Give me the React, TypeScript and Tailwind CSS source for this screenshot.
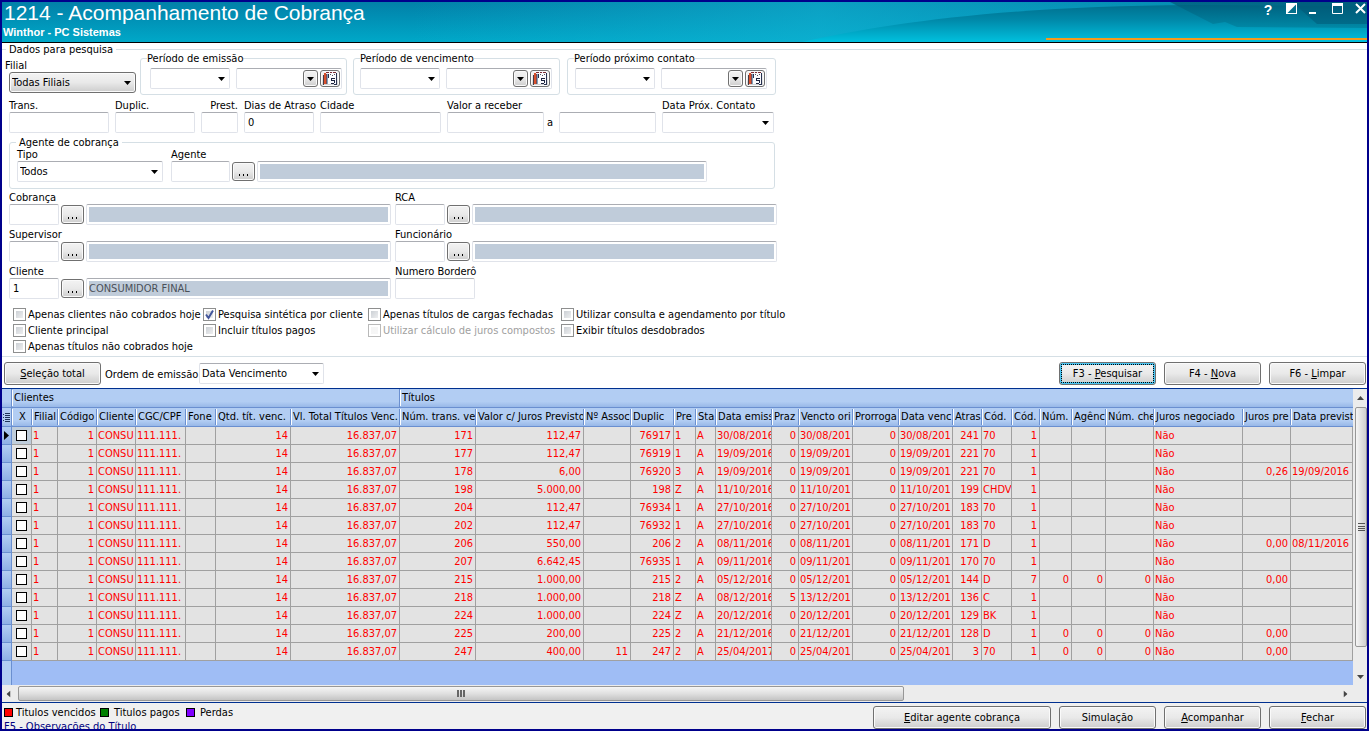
import React from "react";
import clsx from "clsx";

const fieldBorder =
  "border border-[#e0e3ea] border-t-[#abadb3] rounded-xs bg-white";
const buttonFace =
  "rounded-[3px] border border-[#707070] bg-linear-to-b from-[#f3f3f3] from-0% via-[#e9e9e9] via-50% to-[#cdcdcd] to-100% shadow-[inset_0_0_0_1px_#fafafa]";

function Arrow({ className }: { className?: string }) {
  return (
    <svg viewBox="0 0 7 4" className={clsx("h-1 w-[7px]", className)}>
      <path d="M0 0h7L3.5 4z" fill="currentColor" />
    </svg>
  );
}

type FieldProps = {
  label: string;
  className: string;
  value?: string;
  labelClass?: string;
};

function Field({ label, className, value = "", labelClass }: FieldProps) {
  return (
    <label className={clsx("block shrink-0", className)}>
      <span className={clsx("block h-3 leading-3 whitespace-nowrap", labelClass)}>
        {label}
      </span>
      <input
        defaultValue={value}
        className={clsx("block h-[21px] w-full px-[3px]", fieldBorder)}
      />
    </label>
  );
}

type ComboProps = {
  name: string;
  value?: string;
  className: string;
  raised?: boolean;
};

function Combo({ name, value = "", className, raised = false }: ComboProps) {
  return (
    <span className={clsx("relative block h-[21px] shrink-0", className)}>
      <select
        aria-label={name}
        className={clsx(
          "block h-full w-full appearance-none px-0.5",
          raised ? buttonFace : fieldBorder
        )}
      >
        <option>{value}</option>
      </select>
      <Arrow className="pointer-events-none absolute top-[9px] right-[5px]" />
    </span>
  );
}

type PeriodProps = { title: string; className: string; pad: string };

function Period({ title, className, pad }: PeriodProps) {
  return (
    <fieldset
      className={clsx("shrink-0 rounded-[3px] border border-[#d5dfe5]", className)}
    >
      <legend className="ml-1.5 h-[13px] leading-[13px] whitespace-nowrap">
        {title}
      </legend>
      <div className={clsx("flex gap-1.5 pt-[3px] pb-[5px]", pad)}>
        <Combo name={`${title} - tipo`} className="w-20" />
        <div
          className={clsx("flex h-[21px] w-[106px] gap-0.5 p-px", fieldBorder)}
        >
          <input aria-label={title} className="min-w-0 flex-1 px-0.5" />
          <button
            aria-label="Abrir lista"
            className={clsx(
              "flex h-[17px] w-[15px] items-center justify-center",
              buttonFace
            )}
          >
            <Arrow />
          </button>
          <button
            aria-label="Calendário"
            className={clsx(
              "flex h-[17px] w-5 items-center justify-center",
              buttonFace
            )}
          >
            <svg viewBox="0 0 16 13" className="h-[13px] w-4">
              <path d="M1 3h1v10H1z" fill="#4a3a42" />
              <path d="M2 1h2v11H2z" fill="#d8502c" />
              <path d="M4 2h1v10H4z" fill="#7c4a52" />
              <path d="M5 2h1v10H5z" fill="#7fa3bd" />
              <path d="M6 1h8v11H6z" fill="#fbfbfd" />
              <path d="M6 2h1v4H6zM14 1h1v11h-1zM12 12h3v1h-3z" fill="#26304f" />
              <path d="M4 0h3v1H4zM8 0h2v1H8zM11 0h3v1h-3z" fill="#7a2c34" />
              <path d="M8 2h1v1H8zM10 3h1v1h-1zM12 2h1v1h-1z" fill="#54545e" />
              <path d="M9 6h4v1h-3v1h3v3h-1V9H9z" fill="#1d2440" />
              <path d="M9 11h3v1H9z" fill="#1d2440" />
            </svg>
          </button>
        </div>
      </div>
    </fieldset>
  );
}

type LookupProps = {
  label: string;
  code?: string;
  text?: string;
  codeClass?: string;
  textClass?: string;
};

function Lookup({
  label,
  code = "",
  text = "",
  codeClass = "w-[50px]",
  textClass = "w-[305px]",
}: LookupProps) {
  return (
    <div className="flex shrink-0 items-end gap-0.5">
      <Field label={label} value={code} className={codeClass} />
      <button
        aria-label={`Localizar ${label}`}
        className={clsx(
          "mb-px flex h-[19px] w-[23px] items-center justify-center gap-0.5 pt-1.5",
          buttonFace
        )}
      >
        <i className="h-0.5 w-px bg-black" />
        <i className="mx-px h-0.5 w-px bg-black" />
        <i className="h-0.5 w-px bg-black" />
      </button>
      <input
        readOnly
        aria-label={`${label} - descrição`}
        value={text}
        className={clsx(
          "h-[21px] rounded-xs border border-[#e0e3ea] border-t-[#abadb3] bg-[#c0ccda] bg-clip-content p-0.5 text-[#4b5058]",
          textClass
        )}
      />
    </div>
  );
}

type CheckProps = { label: string; checked?: boolean; disabled?: boolean };

function Check({ label, checked, disabled }: CheckProps) {
  return (
    <label
      className={clsx(
        "flex h-4 items-center gap-0.5 whitespace-nowrap",
        disabled && "text-[#a0a0a0]"
      )}
    >
      <span className="relative size-[13px] shrink-0">
        <input
          type="checkbox"
          defaultChecked={checked}
          disabled={disabled}
          className="block size-[13px] appearance-none border border-[#8e8f8f] bg-linear-to-br from-[#c3c8ce] to-[#f7f7f7] bg-clip-content p-0.5 disabled:border-[#b9b9b9] disabled:from-[#f4f4f4]"
        />
        {checked && (
          <svg
            viewBox="0 0 13 13"
            className="pointer-events-none absolute inset-0 size-[13px]"
          >
            <path
              d="M3 6.500l2.500 3.500L10 2.500"
              stroke="#42569c"
              strokeWidth="2"
              fill="none"
            />
          </svg>
        )}
      </span>
      {label}
    </label>
  );
}

type ButtonProps = {
  before?: string;
  hot?: string;
  after: string;
  className?: string;
  focused?: boolean;
};

function Button({
  before,
  hot,
  after,
  className = "w-[97px]",
  focused,
}: ButtonProps) {
  return (
    <button
      className={clsx(
        "h-[23px] shrink-0 whitespace-nowrap",
        buttonFace,
        focused &&
          "border-[#3c6f8c] shadow-[inset_0_0_0_2px_#4cc4f0] outline-1 -outline-offset-3 outline-dotted outline-black",
        className
      )}
    >
      {before}
      {hot && <u>{hot}</u>}
      {after}
    </button>
  );
}

const columns = [
  { title: "X", width: "w-5", align: "text-center" },
  { title: "Filial", width: "w-[26px]", align: "text-left" },
  { title: "Código", width: "w-[39px]", align: "text-right" },
  { title: "Cliente", width: "w-[39px]", align: "text-left" },
  { title: "CGC/CPF", width: "w-[50px]", align: "text-left" },
  { title: "Fone", width: "w-[30px]", align: "text-left" },
  { title: "Qtd. tít. venc.", width: "w-[75px]", align: "text-right" },
  { title: "Vl. Total Títulos Venc.", width: "w-[109px]", align: "text-right" },
  { title: "Núm. trans. ve", width: "w-[76px]", align: "text-right" },
  { title: "Valor c/ Juros Previsto", width: "w-[108px]", align: "text-right" },
  { title: "Nº Assoc", width: "w-[47px]", align: "text-right" },
  { title: "Duplic", width: "w-[43px]", align: "text-right" },
  { title: "Pre", width: "w-[22px]", align: "text-left" },
  { title: "Sta", width: "w-5", align: "text-left" },
  { title: "Data emiss", width: "w-[56px]", align: "text-left" },
  { title: "Praz", width: "w-[27px]", align: "text-right" },
  { title: "Vencto ori", width: "w-[54px]", align: "text-left" },
  { title: "Prorroga", width: "w-[46px]", align: "text-right" },
  { title: "Data venc", width: "w-[54px]", align: "text-left" },
  { title: "Atras", width: "w-[29px]", align: "text-right" },
  { title: "Cód.", width: "w-[30px]", align: "text-left" },
  { title: "Cód.", width: "w-7", align: "text-right" },
  { title: "Núm.", width: "w-8", align: "text-right" },
  { title: "Agênc", width: "w-[34px]", align: "text-right" },
  { title: "Núm. che", width: "w-12", align: "text-right" },
  { title: "Juros negociado", width: "w-[89px]", align: "text-left" },
  { title: "Juros pre", width: "w-12", align: "text-right" },
  { title: "Data previst", width: "", align: "text-left" },
];

// trans, valor, assoc, duplic, prest, emissão, prazo, vencto, atraso, cobrança, cód., nums, juros prev., data prev.
const titles = [
  ["171", "112,47", "", "76917", "1", "30/08/2016", "0", "30/08/201", "241", "70", "1", "", "", ""],
  ["177", "112,47", "", "76919", "1", "19/09/2016", "0", "19/09/201", "221", "70", "1", "", "", ""],
  ["178", "6,00", "", "76920", "3", "19/09/2016", "0", "19/09/201", "221", "70", "1", "", "0,26", "19/09/2016"],
  ["198", "5.000,00", "", "198", "Z", "11/10/2016", "0", "11/10/201", "199", "CHDV", "1", "", "", ""],
  ["204", "112,47", "", "76934", "1", "27/10/2016", "0", "27/10/201", "183", "70", "1", "", "", ""],
  ["202", "112,47", "", "76932", "1", "27/10/2016", "0", "27/10/201", "183", "70", "1", "", "", ""],
  ["206", "550,00", "", "206", "2", "08/11/2016", "0", "08/11/201", "171", "D", "1", "", "0,00", "08/11/2016"],
  ["207", "6.642,45", "", "76935", "1", "09/11/2016", "0", "09/11/201", "170", "70", "1", "", "", ""],
  ["215", "1.000,00", "", "215", "2", "05/12/2016", "0", "05/12/201", "144", "D", "7", "0", "0,00", ""],
  ["218", "1.000,00", "", "218", "Z", "08/12/2016", "5", "13/12/201", "136", "C", "1", "", "", ""],
  ["224", "1.000,00", "", "224", "Z", "20/12/2016", "0", "20/12/201", "129", "BK", "1", "", "", ""],
  ["225", "200,00", "", "225", "2", "21/12/2016", "0", "21/12/201", "128", "D", "1", "0", "0,00", ""],
  ["247", "400,00", "11", "247", "2", "25/04/2017", "0", "25/04/201", "3", "70", "1", "0", "0,00", ""],
];

function toCells(t: string[]) {
  const [trans, valor, assoc, duplic, prest, emissao, prazo, vencto] = t;
  const [atraso, cobranca, cod, num, juros, prevista] = t.slice(8);
  return [
    "1", "1", "CONSU", "111.111.", "", "14", "16.837,07",
    trans, valor, assoc, duplic, prest, "A", emissao, prazo, vencto, "0",
    vencto, atraso, cobranca, cod, num, num, num, "Não", juros, prevista,
  ];
}

const headCell =
  "h-[19px] border-b border-b-[#6a8fd0] bg-linear-to-b from-[#b2cdf3] from-70% to-[#98b8e8] p-0 text-left font-normal";

function Grid() {
  return (
    <table className="w-full table-fixed border-separate border-spacing-0">
      <colgroup>
        <col className="w-2.5" />
        {columns.map((c, i) => (
          <col key={i} className={c.width} />
        ))}
      </colgroup>
      <thead>
        <tr>
          <th className={clsx(headCell, "border-r border-r-[#6a8fd0]")} />
          <th
            colSpan={8}
            className={clsx(headCell, "border-r border-r-[#6a8fd0]")}
          >
            <div className="border-l border-white pl-px leading-4">Clientes</div>
          </th>
          <th colSpan={20} className={headCell}>
            <div className="border-l border-white pl-px leading-4">Títulos</div>
          </th>
        </tr>
        <tr>
          <th className={clsx(headCell, "border-r border-r-[#6a8fd0]")}>
            <svg viewBox="0 0 8 9" className="ml-px h-[9px] w-2">
              <path
                d="M0 1.500h1M2 .5h5M2 2.500h5M0 4.500h1M2 4.500h5M2 6.500h5M0 7.500h1M2 8.500h5"
                stroke="#1f3458"
              />
            </svg>
          </th>
          {columns.map((c, i) => (
            <th key={i} className={headCell}>
              <div
                className={clsx(
                  "h-4 overflow-hidden border-l border-white pl-px leading-4 whitespace-nowrap",
                  i < columns.length - 1 && "border-r border-r-[#6a8fd0]",
                  i === 0 && "text-center"
                )}
              >
                {c.title}
              </div>
            </th>
          ))}
        </tr>
      </thead>
      <tbody>
        {titles.map((t, row) => (
          <tr key={row} className="bg-[#e3e3e3] text-[#ff0000]">
            <td className="h-[18px] border-r border-b border-[#6a8fd0] bg-linear-to-b from-[#b2cdf3] to-[#8fb0e6] p-0">
              {row === 0 && (
                <svg viewBox="0 0 5 9" className="ml-0.5 h-[9px] w-[5px]">
                  <path d="M0 0l5 4.500L0 9z" fill="#000" />
                </svg>
              )}
            </td>
            <td
              className={clsx(
                "border-r border-b border-[#a0a0a0] p-0",
                row === 0 && "bg-[#bfcddb]"
              )}
            >
              <input
                type="checkbox"
                aria-label={`Selecionar título ${t[0]}`}
                className="mx-auto block size-[11px] appearance-none border border-black bg-white"
              />
            </td>
            {toCells(t).map((value, i) => (
              <td key={i} className="border-r border-b border-[#a0a0a0] p-0">
                <div
                  className={clsx(
                    "h-[17px] overflow-hidden leading-[17px] whitespace-nowrap",
                    columns[i + 1].align,
                    columns[i + 1].align === "text-right" ? "pr-0.5" : "pl-px"
                  )}
                >
                  {value}
                </div>
              </td>
            ))}
          </tr>
        ))}
      </tbody>
    </table>
  );
}

function TitleBar() {
  return (
    <header className="relative h-[41px] shrink-0 overflow-hidden border-b border-black bg-linear-to-b from-[#0280a8] to-[#00a8c8] text-white">
      <svg
        viewBox="0 0 1365 40"
        preserveAspectRatio="none"
        className="absolute inset-0 h-full w-full"
      >
        <defs>
          <linearGradient id="glow" x1="0" y1="0" x2="1" y2="0">
            <stop offset="0.3" stopColor="#12b4d4" stopOpacity="0" />
            <stop offset="0.6" stopColor="#12b4d4" stopOpacity="0.6" />
            <stop offset="1" stopColor="#0795b8" stopOpacity="0.3" />
          </linearGradient>
          <linearGradient id="wave" x1="0" y1="0" x2="0" y2="1">
            <stop offset="0" stopColor="#00708f" />
            <stop offset="0.4" stopColor="#0089a9" />
            <stop offset="1" stopColor="#00c0de" />
          </linearGradient>
          <linearGradient id="shade" x1="0" y1="0" x2="0" y2="1">
            <stop offset="0" stopColor="#005a78" />
            <stop offset="1" stopColor="#00829f" />
          </linearGradient>
        </defs>
        <path d="M0 0h1365v40H0z" fill="url(#glow)" />
        <path
          d="M800 40C880 22 1000 4 1190 3L1365 4V40z"
          fill="url(#wave)"
        />
        <path
          d="M1168 0h197v26l-130-1-12-5-12 2z"
          fill="url(#shade)"
          opacity="0.75"
        />
        <path d="M1290 0h75v22h-50z" fill="#005673" opacity="0.5" />
        <path d="M1044 37h321" stroke="#f39a1e" strokeWidth="2" />
      </svg>
      <div className="relative flex justify-between">
        <div className="font-['Liberation_Sans',Arial,sans-serif]">
          <h1 className="pl-0.5 text-[21px] leading-[22px]">
            1214 - Acompanhamento de Cobrança
          </h1>
          <p className="pt-0.5 pl-px text-[11px] leading-3 font-bold">
            Winthor - PC Sistemas
          </p>
        </div>
        <div className="flex h-[13px] items-center">
          <button
            aria-label="Ajuda"
            className="w-[22px] self-start font-['Liberation_Sans',Arial,sans-serif] text-[14px] leading-4 font-bold"
          >
            ?
          </button>
          <button aria-label="Recolher" className="w-6">
            <svg viewBox="0 0 11 11" className="mx-auto size-[11px]">
              <path d="M0 0h11v11H0z" fill="#fff" />
              <path d="M10 1.500V10H1.500z" fill="#05708c" />
            </svg>
          </button>
          <button aria-label="Minimizar" className="w-[18px]">
            <svg viewBox="0 0 11 11" className="mx-auto size-[11px]">
              <path d="M2 9h7v2H2z" fill="#fff" />
            </svg>
          </button>
          <button aria-label="Maximizar" className="w-8">
            <svg viewBox="0 0 11 11" className="mx-auto size-[11px]">
              <path d="M.5 1v9.500h10V1" stroke="#fff" fill="none" />
              <path d="M0 0h11v3H0z" fill="#fff" />
            </svg>
          </button>
          <button aria-label="Fechar janela" className="w-3.5">
            <svg viewBox="0 0 11 11" className="mx-auto size-[11px]">
              <path d="M1 1l9 9M10 1l-9 9" stroke="#fff" strokeWidth="2" />
            </svg>
          </button>
        </div>
      </div>
    </header>
  );
}

function SearchForm() {
  return (
    <fieldset className="shrink-0 border-t border-b border-[#d5dfe5] pb-0.5">
      <legend className="ml-1 h-[13px] px-[3px] leading-[13px]">
        Dados para pesquisa
      </legend>
      <div className="-mt-1 flex flex-col pl-[7px]">
        <div className="flex">
          <div className="mr-1 pt-2">
            <div className="-ml-1 h-3 leading-3">Filial</div>
            <Combo
              name="Filial"
              value="Todas Filiais"
              className="w-[127px]"
              raised
            />
          </div>
          <Period
            title="Período de emissão"
            className="mr-1.5 w-[207px]"
            pad="pl-[9px]"
          />
          <Period
            title="Período de vencimento"
            className="mr-[7px] w-[207px]"
            pad="pl-1.5"
          />
          <Period
            title="Período próximo contato"
            className="w-[209px]"
            pad="pl-[7px]"
          />
        </div>

        <div className="mt-[5px] flex items-end gap-1.5">
          <Field label="Trans." className="w-[100px]" />
          <Field label="Duplic." className="w-20" />
          <Field label="Prest." className="w-[37px]" labelClass="text-right" />
          <Field label="Dias de Atraso" className="w-[70px]" value="0" />
          <Field label="Cidade" className="w-[121px]" />
          <div className="flex items-end gap-[3px]">
            <Field label="Valor a receber" className="w-[97px]" />
            <span className="w-[9px] leading-5">a</span>
            <input
              aria-label="Valor a receber até"
              className={clsx("h-[21px] w-[97px] px-[3px]", fieldBorder)}
            />
          </div>
          <div>
            <div className="h-3 leading-3">Data Próx. Contato</div>
            <Combo name="Data Próx. Contato" className="w-28" />
          </div>
        </div>

        <fieldset className="mt-[3px] w-[766px] rounded-[3px] border border-[#d5dfe5] pb-1.5">
          <legend className="ml-1.5 h-[13px] px-[3px] leading-[13px]">
            Agente de cobrança
          </legend>
          <div className="flex items-end gap-2 pl-[7px]">
            <div>
              <div className="h-3 leading-3">Tipo</div>
              <Combo name="Tipo" value="Todos" className="w-[146px]" />
            </div>
            <Lookup
              label="Agente"
              codeClass="w-[59px]"
              textClass="w-[450px]"
            />
          </div>
        </fieldset>

        <div className="mt-[3px] flex gap-1">
          <Lookup label="Cobrança" />
          <Lookup label="RCA" />
        </div>
        <div className="mt-1 flex gap-1">
          <Lookup label="Supervisor" />
          <Lookup label="Funcionário" />
        </div>
        <div className="mt-1 flex gap-1">
          <Lookup label="Cliente" code="1" text="CONSUMIDOR FINAL" />
          <Field label="Numero Borderô" className="w-20" />
        </div>

        <div className="mt-[7px] flex pl-1">
          <div className="w-[190px]">
            <Check label="Apenas clientes não cobrados hoje" />
            <Check label="Cliente principal" />
            <Check label="Apenas títulos não cobrados hoje" />
          </div>
          <div className="w-[165px]">
            <Check label="Pesquisa sintética por cliente" checked />
            <Check label="Incluir títulos pagos" />
          </div>
          <div className="w-[193px]">
            <Check label="Apenas títulos de cargas fechadas" />
            <Check label="Utilizar cálculo de juros compostos" disabled />
          </div>
          <div>
            <Check label="Utilizar consulta e agendamento por título" />
            <Check label="Exibir títulos desdobrados" />
          </div>
        </div>
      </div>
    </fieldset>
  );
}

function Toolbar() {
  return (
    <div className="flex shrink-0 items-center pt-[5px] pr-px pb-[3px] pl-0.5">
      <Button hot="S" after="eleção total" />
      <span className="ml-1 w-[94px] pt-0.5 whitespace-nowrap">
        Ordem de emissão
      </span>
      <Combo
        name="Ordem de emissão"
        value="Data Vencimento"
        className="w-[125px]"
      />
      <div className="ml-auto flex gap-2">
        <Button before="F3 - " hot="P" after="esquisar" focused />
        <Button before="F4 - " hot="N" after="ova" />
        <Button before="F6 - " hot="L" after="impar" />
      </div>
    </div>
  );
}

function VerticalScroll() {
  return (
    <div className="flex w-3.5 shrink-0 flex-col items-center overflow-hidden bg-[#ececec] text-[#444]">
      <div className="flex h-[18px] shrink-0 items-center">
        <Arrow className="rotate-180" />
      </div>
      <div className="ml-0.5 flex h-[81%] w-3 items-center justify-center rounded-xs border border-[#979797] bg-linear-to-r from-[#f5f5f5] to-[#cfcfcf]">
        <div className="h-2 w-[7px] border-y border-[#555]">
          <div className="mt-0.5 border-y border-[#555] pt-px" />
        </div>
      </div>
      <div className="flex flex-1 items-end pb-1.5">
        <Arrow />
      </div>
    </div>
  );
}

function HorizontalScroll() {
  return (
    <div className="flex h-[17px] shrink-0 items-center bg-[#ececec] pr-3.5 text-[#444]">
      <div className="flex w-4 justify-center pr-1">
        <Arrow className="rotate-90" />
      </div>
      <div className="flex h-[15px] flex-888 items-center justify-center gap-px rounded-xs border border-[#979797] bg-linear-to-b from-[#f5f5f5] via-[#e0e0e0] to-[#c4c4c4]">
        <i className="h-[7px] w-0.5 bg-[#666]" />
        <i className="h-[7px] w-0.5 bg-[#666]" />
        <i className="h-[7px] w-0.5 bg-[#666]" />
      </div>
      <div className="flex flex-447 justify-end pr-1">
        <Arrow className="-rotate-90" />
      </div>
    </div>
  );
}

function Legend() {
  return (
    <div className="pt-[3px] pl-0.5">
      <div className="flex h-[13px] items-center whitespace-nowrap">
        <i className="mr-[3px] size-[9px] border border-black bg-[#ff0000]" />
        <span className="w-[84px]">Titulos vencidos</span>
        <i className="mr-[5px] size-[9px] border border-black bg-[#008000]" />
        <span className="w-[72px]">Titulos pagos</span>
        <i className="mr-[5px] size-[9px] border border-black bg-[#8000ff]" />
        <span>Perdas</span>
      </div>
      <div className="leading-4 whitespace-nowrap text-[#000080]">
        F5 - Observações do Título
      </div>
    </div>
  );
}

export default function App() {
  return (
    <main className="flex h-screen flex-col overflow-hidden border-2 border-[#00008b] bg-white font-['DejaVu_Sans_Condensed',Tahoma,sans-serif] text-[11px] leading-[13px] text-black">
      <TitleBar />
      <SearchForm />
      <Toolbar />
      <section className="flex min-h-0 flex-1 flex-col border-t border-b border-[#00308f]">
        <div className="flex min-h-0 flex-1">
          <div className="flex min-w-0 flex-1 flex-col bg-[#9fbdf5]">
            <Grid />
            <div className="w-2.5 flex-1 border-r border-[#6a8fd0] bg-[#b2cdf3]" />
          </div>
          <VerticalScroll />
        </div>
        <HorizontalScroll />
      </section>
      <footer className="flex h-[26px] shrink-0 justify-between overflow-hidden bg-[#f0f0f0] pr-px">
        <Legend />
        <div className="flex gap-2 pt-[3px]">
          <Button hot="E" after="ditar agente cobrança" className="w-[178px]" />
          <Button after="Simulação" />
          <Button hot="A" after="companhar" />
          <Button hot="F" after="echar" />
        </div>
      </footer>
    </main>
  );
}
